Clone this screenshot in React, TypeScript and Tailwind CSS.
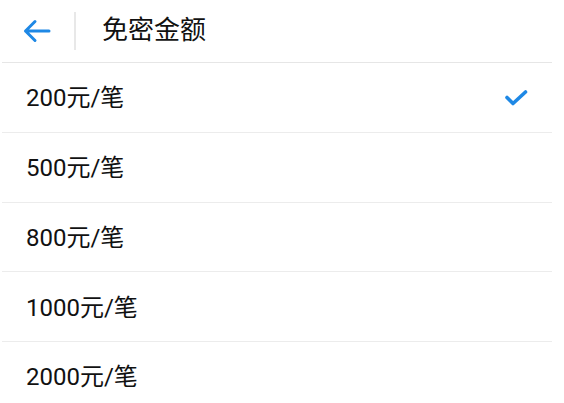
import { useState } from "react";

const amounts = ["200", "500", "800", "1000", "2000"];

function BackArrow() {
  return (
    <svg width="28" height="24" viewBox="0 0 28 24" fill="none">
      <path
        d="M2.5 12H26M12 2.5L2.5 12L12 21.5"
        stroke="#1e88e5"
        strokeWidth="3"
        strokeLinecap="round"
        strokeLinejoin="round"
      />
    </svg>
  );
}

function Check() {
  return (
    <svg width="24" height="18" viewBox="0 0 24 18" fill="none">
      <path
        d="M3 8.5L9 14.5L21.5 3"
        stroke="#1e88e5"
        strokeWidth="3.6"
        strokeLinecap="round"
        strokeLinejoin="round"
      />
    </svg>
  );
}

export default function App() {
  const [selected, setSelected] = useState("200");

  return (
    <div className="min-h-[403px] w-[564px] overflow-hidden bg-white font-['Roboto','Noto_Sans_CJK_SC',sans-serif] text-[#111111]">
      <div className="ml-[2px] w-[550px]">
        <div className="flex h-[63px] items-center border-b border-[#e6e6e6]">
          <div className="ml-[21px] flex h-[24px] items-center">
            <BackArrow />
          </div>
          <div className="ml-[23px] h-[38px] w-[2px] bg-[#e8e8e8]" />
          <h1 className="ml-[26px] pb-[2px] text-[26px] leading-none font-normal">免密金额</h1>
        </div>
        {amounts.map((a) => (
          <button
            key={a}
            onClick={() => setSelected(a)}
            className="flex h-[69.75px] w-full items-center justify-between border-b border-[#ececec] pt-[2px] pr-[24px] pl-[24px] text-left"
          >
            <span className="text-[24px] leading-none">{a}元/笔</span>
            {selected === a ? <Check /> : null}
          </button>
        ))}
      </div>
    </div>
  );
}
